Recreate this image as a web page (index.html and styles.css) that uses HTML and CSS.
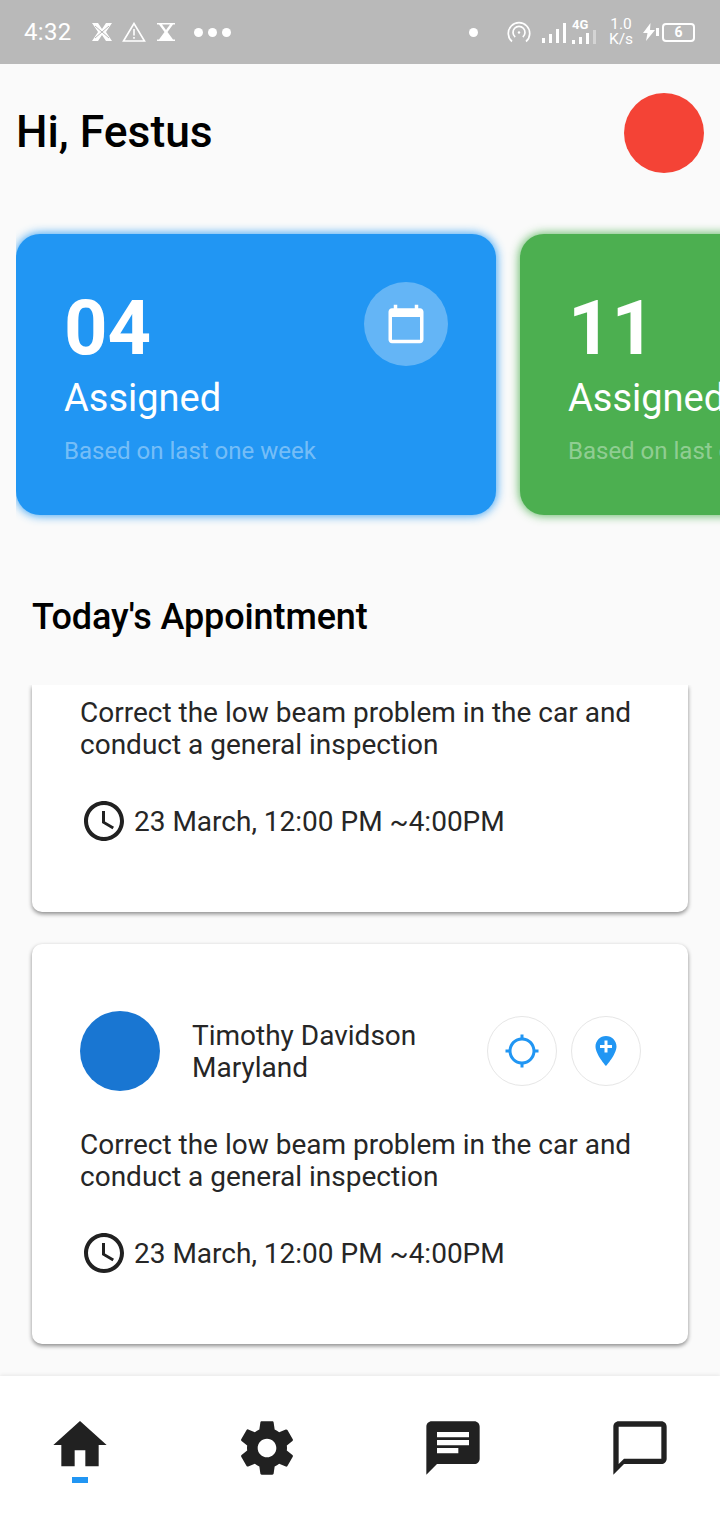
FILE: index.html
```html
<!DOCTYPE html>
<html>
<head>
    <title>Dashboard</title>
    <meta name="viewport" content="width=device-width, initial-scale=1">
    <link rel="stylesheet" href="styles.css">
</head>
<body>
    <div class="status-bar">
        <span class="status-time">4:32</span>
        <svg class="st-x" viewBox="0 0 20 18"><path d="M0 0h6l4 6 4-6h6l-6 9 6 9h-6l-4-6-4 6H0l6-9z" fill="#fff"/><path d="M3 3l7 6M17 3l-7 6M3 15l7-6M17 15l-7-6" stroke="#b9b9b9" stroke-width="1"/></svg>
        <svg class="st-warn" viewBox="0 0 24 20"><path d="M12 1.5L1.5 19h21z" fill="none" stroke="#fff" stroke-width="1.6"/><path d="M11.2 7h1.6v6.5h-1.6zM11.2 15h1.6v1.8h-1.6z" fill="#fff"/></svg>
        <svg class="st-glass" viewBox="0 0 18 18"><path d="M0 0h18v1.6h-2L10.5 9l5.5 7.4h2V18H0v-1.6h2L7.5 9 2 1.6H0z" fill="#fff"/><path d="M5 1.6h8L9 7z" fill="#b9b9b9"/></svg>
        <div class="status-dots"><i></i><i></i><i></i></div>
        <div class="status-right">
            <i class="st-dot"></i>
            <svg class="st-hotspot" viewBox="0 0 24 22" fill="none" stroke="#fff" stroke-width="1.7"><path d="M5 20.5a10.7 10.7 0 1 1 14 0"/><path d="M8.2 16a6 6 0 1 1 7.6 0"/><circle cx="12" cy="11.5" r="1.2" fill="#fff" stroke="none"/></svg>
            <div class="st-signal"><i class="h1"></i><i class="h2"></i><i class="h3"></i><i class="h4"></i></div>
            <div class="st-net">
                <span class="st-4g">4G</span>
                <div class="st-signal small"><i class="h1"></i><i class="h2"></i><i class="h3"></i><i class="h4 dim"></i></div>
            </div>
            <div class="st-speed"><span>1.0</span><span>K/s</span></div>
            <svg class="st-bolt" viewBox="0 0 12 18"><path d="M7.5 0L0 10h4.5L3 18l9-11H7z" fill="#fff"/></svg>
            <i class="st-nub"></i>
            <div class="st-battery">6</div>
        </div>
    </div>

    <header class="top">
        <h1>Hi, Festus</h1>
        <div class="avatar"></div>
    </header>

    <div class="stats">
        <div class="stat-card blue">
            <div class="stat-text">
                <div class="stat-num">04</div>
                <div class="stat-label">Assigned</div>
                <div class="stat-note">Based on last one week</div>
            </div>
            <div class="stat-icon">
                <svg viewBox="0 0 24 24"><path d="M20 3h-1V1h-2v2H7V1H5v2H4c-1.1 0-2 .9-2 2v16c0 1.1.9 2 2 2h16c1.1 0 2-.9 2-2V5c0-1.1-.9-2-2-2zm0 18H4V8h16v13z" fill="#fff"/></svg>
            </div>
        </div>
        <div class="stat-card green">
            <div class="stat-text">
                <div class="stat-num">11</div>
                <div class="stat-label">Assigned</div>
                <div class="stat-note">Based on last one week</div>
            </div>
        </div>
    </div>

    <h2 class="section-title">Today's Appointment</h2>

    <div class="list">
        <div class="appt cut">
            <p class="appt-desc">Correct the low beam problem in the car and conduct a general inspection</p>
            <div class="appt-time">
                <svg viewBox="0 0 24 24"><path d="M11.99 2C6.47 2 2 6.48 2 12s4.47 10 9.99 10C17.52 22 22 17.52 22 12S17.52 2 11.99 2zM12 20c-4.42 0-8-3.58-8-8s3.58-8 8-8 8 3.58 8 8-3.58 8-8 8zm.5-13H11v6l5.25 3.15.75-1.23-4.5-2.67z"/></svg>
                <span>23 March, 12:00 PM ~4:00PM</span>
            </div>
        </div>
        <div class="appt">
            <div class="appt-head">
                <div class="appt-avatar"></div>
                <div class="appt-name">Timothy Davidson<br>Maryland</div>
                <div class="appt-btn"><svg viewBox="0 0 24 24"><path d="M20.94 11c-.46-4.17-3.77-7.48-7.94-7.94V1h-2v2.06C6.83 3.52 3.52 6.83 3.06 11H1v2h2.06c.46 4.17 3.77 7.48 7.94 7.94V23h2v-2.06c4.17-.46 7.48-3.77 7.94-7.94H23v-2h-2.06zM12 19c-3.87 0-7-3.13-7-7s3.13-7 7-7 7 3.13 7 7-3.13 7-7 7z"/></svg></div>
                <div class="appt-btn"><svg viewBox="0 0 24 24"><path d="M12 2C8.14 2 5 5.14 5 9c0 5.25 7 13 7 13s7-7.75 7-13c0-3.86-3.14-7-7-7zm4 8h-3v3h-2v-3H8V8h3V5h2v3h3v2z"/></svg></div>
            </div>
            <p class="appt-desc">Correct the low beam problem in the car and conduct a general inspection</p>
            <div class="appt-time">
                <svg viewBox="0 0 24 24"><path d="M11.99 2C6.47 2 2 6.48 2 12s4.47 10 9.99 10C17.52 22 22 17.52 22 12S17.52 2 11.99 2zM12 20c-4.42 0-8-3.58-8-8s3.58-8 8-8 8 3.58 8 8-3.58 8-8 8zm.5-13H11v6l5.25 3.15.75-1.23-4.5-2.67z"/></svg>
                <span>23 March, 12:00 PM ~4:00PM</span>
            </div>
        </div>
    </div>

    <nav class="bottom-nav">
        <div class="nav-item active">
            <svg viewBox="0 0 24 24"><path d="M10 20v-6h4v6h5v-8h3L12 3 2 12h3v8z"/></svg>
            <i class="nav-mark"></i>
        </div>
        <div class="nav-item">
            <svg viewBox="0 0 24 24"><path d="M19.43 12.98c.04-.32.07-.64.07-.98s-.03-.66-.07-.98l2.11-1.65c.19-.15.24-.42.12-.64l-2-3.46c-.12-.22-.39-.3-.61-.22l-2.49 1c-.52-.4-1.08-.73-1.69-.98l-.38-2.65C14.46 2.18 14.25 2 14 2h-4c-.25 0-.46.18-.49.42l-.38 2.65c-.61.25-1.17.59-1.69.98l-2.49-1c-.23-.09-.49 0-.61.22l-2 3.46c-.13.22-.07.49.12.64l2.11 1.65c-.04.32-.07.65-.07.98s.03.66.07.98l-2.11 1.65c-.19.15-.24.42-.12.64l2 3.46c.12.22.39.3.61.22l2.49-1c.52.4 1.08.73 1.69.98l.38 2.65c.03.24.24.42.49.42h4c.25 0 .46-.18.49-.42l.38-2.65c.61-.25 1.17-.59 1.69-.98l2.49 1c.23.09.49 0 .61-.22l2-3.46c.12-.22.07-.49-.12-.64l-2.11-1.65zM12 15.5c-1.93 0-3.5-1.57-3.5-3.5s1.57-3.5 3.5-3.5 3.5 1.57 3.5 3.5-1.57 3.5-3.5 3.5z"/></svg>
        </div>
        <div class="nav-item">
            <svg viewBox="0 0 24 24"><path d="M20 2H4c-1.1 0-1.99.9-1.99 2L2 22l4-4h14c1.1 0 2-.9 2-2V4c0-1.1-.9-2-2-2zM6 9h12v2H6V9zm8 5H6v-2h8v2zm4-6H6V6h12v2z"/></svg>
        </div>
        <div class="nav-item">
            <svg viewBox="0 0 24 24"><path d="M20 2H4c-1.1 0-2 .9-2 2v18l4-4h14c1.1 0 2-.9 2-2V4c0-1.1-.9-2-2-2zm0 14H6l-2 2V4h16v12z"/></svg>
        </div>
    </nav>
</body>
</html>
```

FILE: styles.css
```css
html, body {
    margin: 0;
    padding: 0;
}
body {
    width: 720px;
    height: 1520px;
    overflow: hidden;
    background-color: #fafafa;
    font-family: Roboto, sans-serif;
    color: #262626;
    display: flex;
    flex-direction: column;
}

/* status bar */
.status-bar {
    flex: none;
    height: 64px;
    background-color: #b9b9b9;
    color: #fff;
    display: flex;
    align-items: center;
    padding: 0 24px;
    box-sizing: border-box;
}
.status-time {
    font-size: 24px;
    letter-spacing: 0.3px;
    width: 68px;
}
.st-x {
    width: 20px;
    height: 18px;
    margin-right: 10px;
}
.st-warn {
    width: 24px;
    height: 20px;
    margin-right: 11px;
}
.st-glass {
    width: 18px;
    height: 18px;
    margin-right: 19px;
}
.status-dots {
    display: flex;
    gap: 5px;
}
.status-dots i, .st-dot {
    display: block;
    width: 9px;
    height: 9px;
    border-radius: 50%;
    background-color: #fff;
}
.status-right {
    margin-left: auto;
    display: flex;
    align-items: center;
}
.st-dot {
    margin-right: 29px;
}
.st-hotspot {
    width: 24px;
    height: 22px;
    margin-right: 11px;
}
.st-signal {
    display: flex;
    align-items: flex-end;
    gap: 4px;
    height: 20px;
    margin-top: 1px;
}
.st-signal i {
    display: block;
    width: 3px;
    background-color: #fff;
}
.st-signal .h1 { height: 5px; }
.st-signal .h2 { height: 9px; }
.st-signal .h3 { height: 14px; }
.st-signal .h4 { height: 20px; }
.st-signal .dim { background-color: #d4d4d4; }
.st-signal.small {
    height: 14px;
    margin-top: 0;
}
.st-signal.small .h1 { height: 4px; }
.st-signal.small .h2 { height: 7px; }
.st-signal.small .h3 { height: 11px; }
.st-signal.small .h4 { height: 14px; }
.st-net {
    margin-left: 6px;
    margin-top: -1px;
    width: 32px;
}
.st-4g {
    display: block;
    font-size: 13px;
    font-weight: 700;
    line-height: 10px;
}
.st-speed {
    display: flex;
    flex-direction: column;
    align-items: center;
    font-size: 15.5px;
    line-height: 15px;
    margin-left: 4px;
    width: 26px;
}
.st-bolt {
    width: 12px;
    height: 18px;
    margin-left: 9px;
}
.st-nub {
    display: block;
    width: 3px;
    height: 8px;
    margin-left: 1px;
    background-color: #fff;
}
.st-battery {
    width: 33px;
    height: 19px;
    margin-left: 3px;
    margin-right: 1px;
    box-sizing: border-box;
    border: 2px solid #fff;
    border-radius: 4px;
    font-size: 14px;
    font-weight: 700;
    line-height: 15px;
    text-align: center;
}

/* header */
.top {
    flex: none;
    height: 170px;
    padding: 29px 16px 0;
    box-sizing: border-box;
    display: flex;
    justify-content: space-between;
    align-items: flex-start;
}
.top h1 {
    margin: 15px 0 0;
    font-size: 44.4px;
    line-height: 48px;
    font-weight: 500;
    color: #000;
}
.avatar {
    width: 80px;
    height: 80px;
    border-radius: 50%;
    background-color: #f44336;
}

/* stat cards, the row clips at its left padding like a scroller */
.stats {
    flex: none;
    height: 281px;
    padding-left: 16px;
    display: flex;
    gap: 24px;
    clip-path: inset(-12px 0 -12px 16px);
}
.stat-card {
    flex: none;
    width: 480px;
    height: 281px;
    border-radius: 24px;
    box-sizing: border-box;
    padding: 48px 48px 0 48px;
    display: flex;
    justify-content: space-between;
    align-items: flex-start;
    color: #fff;
}
.stat-card.blue {
    background-color: #2196f3;
    box-shadow: 0 0 10px 1px rgba(33, 150, 243, 0.85);
}
.stat-card.green {
    background-color: #4caf50;
    box-shadow: 0 0 10px 1px rgba(76, 175, 80, 0.85);
}
.stat-num {
    padding-top: 2px;
    font-size: 76px;
    font-weight: 700;
    line-height: 88px;
    white-space: nowrap;
}
.stat-label {
    margin-top: 5px;
    font-size: 38px;
    line-height: 42px;
    white-space: nowrap;
}
.stat-note {
    margin-top: 18px;
    font-size: 24px;
    line-height: 28px;
    color: rgba(255, 255, 255, 0.4);
    white-space: nowrap;
}
.stat-icon {
    width: 84px;
    height: 84px;
    border-radius: 50%;
    background-color: rgba(255, 255, 255, 0.3);
    display: flex;
    align-items: center;
    justify-content: center;
}
.stat-icon svg {
    width: 42px;
    height: 42px;
}

/* appointments */
.section-title {
    flex: none;
    margin: 0;
    height: 170px;
    box-sizing: border-box;
    padding: 81px 32px 0;
    font-size: 36px;
    line-height: 42px;
    font-weight: 500;
    letter-spacing: -0.1px;
    color: #000;
}
.list {
    flex: none;
    height: 691px;
    overflow: hidden;
    padding: 0 32px;
    box-sizing: border-box;
    display: flex;
    flex-direction: column;
    gap: 32px;
}
.appt {
    flex: none;
    height: 400px;
    box-sizing: border-box;
    padding: 67px 48px 0;
    background-color: #fff;
    border-radius: 10px;
    box-shadow: 0 2px 4px rgba(0, 0, 0, 0.45);
}
/* first card is scrolled up under the title */
.appt.cut {
    height: 227px;
    padding-top: 12px;
    border-radius: 0 0 10px 10px;
}
.appt.cut .appt-desc {
    margin-top: 0;
}
.appt-head {
    display: flex;
    align-items: center;
    margin-right: -1px;
}
.appt-avatar {
    flex: none;
    width: 80px;
    height: 80px;
    border-radius: 50%;
    background-color: #1976d2;
}
.appt-name {
    flex: 1;
    margin-left: 32px;
    padding-top: 2px;
    font-size: 28px;
    line-height: 32px;
}
.appt-btn {
    flex: none;
    width: 70px;
    height: 70px;
    margin-left: 14px;
    box-sizing: border-box;
    border: 1.5px solid #e6e6e6;
    border-radius: 50%;
    display: flex;
    align-items: center;
    justify-content: center;
}
.appt-btn svg {
    width: 36px;
    height: 36px;
    fill: #2196f3;
}
.appt-desc {
    margin: 38px 0 0;
    font-size: 28px;
    line-height: 32px;
}
.appt-time {
    margin-top: 36px;
    display: flex;
    align-items: center;
    gap: 6px;
    font-size: 28px;
}
.appt-time svg {
    width: 48px;
    height: 48px;
    fill: #212121;
}

/* bottom nav */
.bottom-nav {
    flex: none;
    height: 144px;
    padding: 40px 48px 0;
    box-sizing: border-box;
    background-color: #fff;
    box-shadow: 0 -1px 4px rgba(0, 0, 0, 0.08);
    display: flex;
    justify-content: space-between;
    align-items: flex-start;
    position: relative;
}
.nav-item {
    width: 64px;
    display: flex;
    flex-direction: column;
    align-items: center;
}
.nav-item svg {
    display: block;
    width: 64px;
    height: 64px;
    fill: #212121;
}
.nav-item.active svg {
    margin-top: -3px;
}
.nav-mark {
    display: block;
    width: 16px;
    height: 6px;
    background-color: #2196f3;
}
```
